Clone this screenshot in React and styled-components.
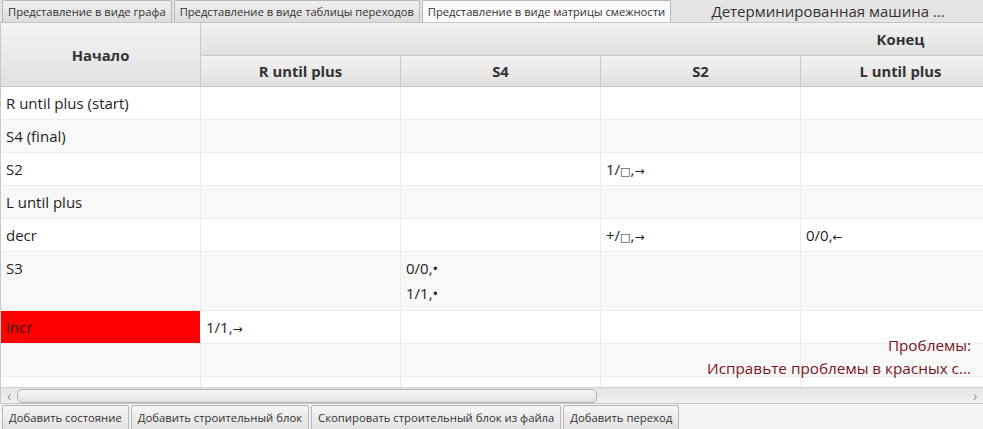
import React from "react";
import styled, { createGlobalStyle } from "styled-components";

const Global = createGlobalStyle`
  html, body { margin: 0; padding: 0; background: #f4f4f4; }
  body { font-family: "Open Sans", "Noto Sans", sans-serif; color: #333; }
  * { box-sizing: border-box; }
`;

const Shell = styled.div`
  width: 983px;
  height: 429px;
  display: flex;
  flex-direction: column;
  background: #f4f4f4;
  overflow: hidden;
`;

const TabBar = styled.div`
  height: 23px;
  flex: none;
  display: flex;
  align-items: flex-end;
  padding-left: 2px;
  gap: 2px;
  background: #e4e4e4;
  border-bottom: 1px solid #c4c4c4;
`;

const Tab = styled.div`
  height: 22px;
  padding: 0 5px;
  display: flex;
  align-items: center;
  font-size: 11.2px;
  color: #333;
  white-space: nowrap;
  border: 1px solid #b8b8b8;
  border-bottom: none;
  border-radius: 2px 2px 0 0;
  background: ${(p) =>
    p.$active ? "#fafafa" : "linear-gradient(#f0f0f0, #dcdcdc)"};
`;

const TabTitle = styled.div`
  flex: 1;
  height: 22px;
  display: flex;
  align-items: center;
  justify-content: center;
  font-size: 15px;
  color: #333;
  white-space: nowrap;
`;

const TableArea = styled.div`
  position: relative;
  flex: 1;
  display: flex;
  flex-direction: column;
  overflow: hidden;
  background: #fff;
  border-left: 1px solid #c8c8c8;
`;

const Viewport = styled.div`
  flex: 1;
  overflow: hidden;
`;

const Header = styled.div`
  display: grid;
  grid-template-columns: repeat(8, 200px);
  grid-template-rows: 33px 31px;
  width: 1600px;
`;

const HeadCell = styled.div`
  grid-column: ${(p) => p.$col};
  grid-row: ${(p) => p.$row};
  display: flex;
  align-items: center;
  justify-content: center;
  font-weight: 700;
  font-size: 14.8px;
  color: #333;
  white-space: nowrap;
  background: linear-gradient(#f3f3f3, #e0e0e0);
  border-right: 1px solid #c8c8c8;
  border-bottom: 1px solid #c8c8c8;
`;

const Row = styled.div`
  display: flex;
  width: 1600px;
  height: ${(p) => (p.$tall ? 59 : 33)}px;
  background: ${(p) => (p.$odd ? "#f8f8f8" : "#ffffff")};
`;

const Cell = styled.div`
  flex: none;
  width: 200px;
  height: 100%;
  display: flex;
  flex-direction: column;
  justify-content: flex-start;
  gap: 3px;
  padding: 5px 5px 0;
  font-size: 15px;
  line-height: 22px;
  color: #1e1e1e;
  white-space: nowrap;
  background: ${(p) => (p.$red ? "#ff0000" : "transparent")};
  border-right: 1px solid #ececec;
  border-bottom: 1px solid #ececec;
`;

const Glyph = styled.span`
  font-family: "DejaVu Sans", sans-serif;
  font-size: ${(p) => p.$size || 12}px;
`;

const Problems = styled.div`
  position: absolute;
  right: 12px;
  bottom: 24px;
  text-align: right;
  color: #7b1322;
  font-size: 15.3px;
  line-height: 23px;
`;

const HScroll = styled.div`
  height: 17px;
  flex: none;
  display: flex;
  align-items: center;
  background: linear-gradient(#e6e6e6, #f0f0f0);
  border-top: 1px solid #d0d0d0;
  border-bottom: 1px solid #c6c6c6;
`;

const Arrow = styled.div`
  width: 16px;
  display: flex;
  align-items: center;
  justify-content: center;
  color: #999;
  font-size: 14px;
`;

const Track = styled.div`
  flex: 1;
  height: 100%;
  display: flex;
  align-items: center;
`;

const Thumb = styled.div`
  height: 14px;
  border: 1px solid #b2b2b2;
  border-radius: 5px;
  background: linear-gradient(#f6f6f6, #e2e2e2);
`;

const ButtonBar = styled.div`
  height: 25px;
  flex: none;
  display: flex;
  align-items: flex-end;
  gap: 2px;
  padding-left: 2px;
  background: #f4f4f4;
`;

const Button = styled.div`
  height: 24px;
  padding: 0 6px;
  display: flex;
  align-items: center;
  font-size: 11.3px;
  color: #333;
  white-space: nowrap;
  border: 1px solid #b5b5b5;
  border-bottom: none;
  border-radius: 2px 2px 0 0;
  background: linear-gradient(#f6f6f6, #e2e2e2);
`;

const states = [
  "R until plus",
  "S4",
  "S2",
  "L until plus",
  "decr",
  "S3",
  "incr",
];

const sq = <Glyph $size={11}>□</Glyph>;
const right = <Glyph $size={12}>→</Glyph>;
const left = <Glyph $size={12}>←</Glyph>;

const rows = [
  { name: "R until plus (start)", cells: {} },
  { name: "S4 (final)", cells: {} },
  { name: "S2", cells: { 2: [<>1/{sq},{right}</>] } },
  { name: "L until plus", cells: {} },
  {
    name: "decr",
    cells: { 2: [<>+/{sq},{right}</>], 3: [<>0/0,{left}</>] },
  },
  { name: "S3", cells: { 1: ["0/0,•", "1/1,•"] }, tall: true },
  { name: "incr", cells: { 0: [<>1/1,{right}</>] }, red: true },
  { name: "", cells: {} },
  { name: "", cells: {} },
];

export default function App() {
  return (
    <Shell>
      <Global />
      <TabBar>
        <Tab>Представление в виде графа</Tab>
        <Tab>Представление в виде таблицы переходов</Tab>
        <Tab $active>Представление в виде матрицы смежности</Tab>
        <TabTitle>Детерминированная машина ...</TabTitle>
      </TabBar>
      <TableArea>
        <Viewport>
          <Header>
            <HeadCell $col="1" $row="1 / span 2">
              Начало
            </HeadCell>
            <HeadCell $col="2 / span 7" $row="1">
              Конец
            </HeadCell>
            {states.map((s, i) => (
              <HeadCell key={s} $col={`${i + 2}`} $row="2">
                {s}
              </HeadCell>
            ))}
          </Header>
          {rows.map((r, ri) => (
            <Row key={ri} $odd={ri % 2 === 1} $tall={r.tall}>
              <Cell $red={r.red}>{r.name}</Cell>
              {states.map((s, ci) => (
                <Cell key={s}>
                  {(r.cells[ci] || []).map((t, ti) => (
                    <span key={ti}>{t}</span>
                  ))}
                </Cell>
              ))}
            </Row>
          ))}
        </Viewport>
        <Problems>
          <div>Проблемы:</div>
          <div>Исправьте проблемы в красных с...</div>
        </Problems>
        <HScroll>
          <Arrow>‹</Arrow>
          <Track>
            <Thumb style={{ width: 580 }} />
          </Track>
          <Arrow>›</Arrow>
        </HScroll>
      </TableArea>
      <ButtonBar>
        <Button>Добавить состояние</Button>
        <Button>Добавить строительный блок</Button>
        <Button>Скопировать строительный блок из файла</Button>
        <Button>Добавить переход</Button>
      </ButtonBar>
    </Shell>
  );
}
